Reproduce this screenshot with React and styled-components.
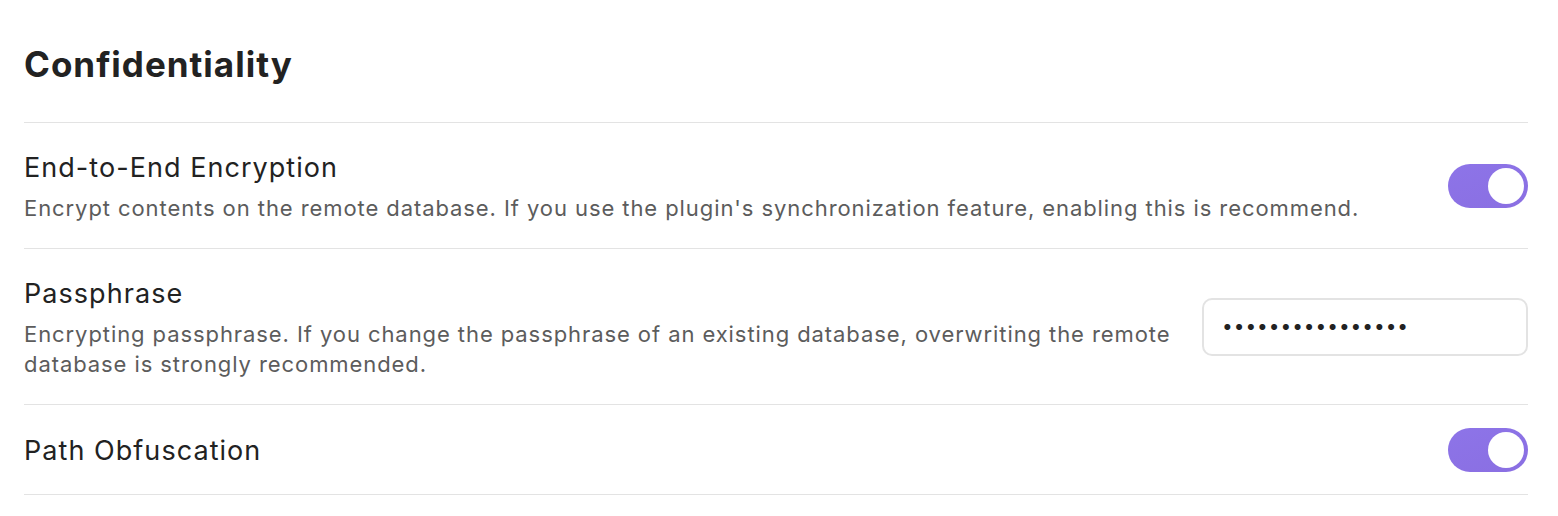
import React from 'react';
import styled, { createGlobalStyle } from 'styled-components';

const GlobalStyle = createGlobalStyle`
  body {
    margin: 0;
    background: #fff;
    font-family: Inter, "Noto Sans", sans-serif;
    -webkit-font-smoothing: antialiased;
  }
`;

const Page = styled.div`
  padding: 43px 30px 0 24px;
`;

const Heading = styled.h3`
  margin: 0 0 37px;
  font-size: 35px;
  line-height: 42px;
  font-weight: 700;
  color: #222;
  letter-spacing: 1px;
`;

const List = styled.div`
  border-bottom: 1px solid #e3e3e3;
`;

const Item = styled.div`
  display: flex;
  align-items: center;
  padding: 22.5px 0;
  border-top: 1px solid #e3e3e3;
`;

const Info = styled.div`
  flex: 1 1 auto;
  margin-right: 30px;
  padding-top: 2px;
`;

const Name = styled.div`
  font-size: 27px;
  line-height: 40px;
  letter-spacing: 1.05px;
  color: #222;
`;

const Desc = styled.div`
  margin-top: 5px;
  padding-bottom: 3px;
  font-size: 22px;
  line-height: 30px;
  letter-spacing: 0.92px;
  color: #5c5c5c;
`;

const Control = styled.div`
  flex: 0 0 auto;
  display: flex;
  justify-content: flex-end;
`;

const Track = styled.div`
  width: 80px;
  height: 44px;
  border-radius: 22px;
  box-sizing: border-box;
  padding: 4px;
  display: flex;
  justify-content: ${({ $on }) => ($on ? 'flex-end' : 'flex-start')};
  background: ${({ $on }) => ($on ? 'linear-gradient(160deg, #8d74e8, #8a6fe2)' : '#d8d8d8')};
  cursor: pointer;
`;

const Knob = styled.div`
  width: 36px;
  height: 36px;
  border-radius: 50%;
  background: #fff;
`;

const Password = styled.input`
  width: 326px;
  height: 58px;
  box-sizing: border-box;
  padding: 0 18px;
  border: 2px solid #e3e3e3;
  border-radius: 10px;
  font-family: Inter, sans-serif;
  font-size: 19px;
  letter-spacing: 1px;
  color: #222;
  background: #fff;
  outline: none;
`;

const Toggle = ({ on }) => (
  <Track $on={on}>
    <Knob />
  </Track>
);

const Setting = ({ name, desc, children }) => (
  <Item>
    <Info>
      <Name>{name}</Name>
      {desc && <Desc>{desc}</Desc>}
    </Info>
    <Control>{children}</Control>
  </Item>
);

export default function App() {
  return (
    <Page>
      <GlobalStyle />
      <Heading>Confidentiality</Heading>
      <List>
        <Setting
          name="End-to-End Encryption"
          desc="Encrypt contents on the remote database. If you use the plugin's synchronization feature, enabling this is recommend."
        >
          <Toggle on />
        </Setting>
        <Setting
          name="Passphrase"
          desc="Encrypting passphrase. If you change the passphrase of an existing database, overwriting the remote database is strongly recommended."
        >
          <Password type="password" value="passphrase123456" readOnly />
        </Setting>
        <Setting name="Path Obfuscation">
          <Toggle on />
        </Setting>
      </List>
    </Page>
  );
}
